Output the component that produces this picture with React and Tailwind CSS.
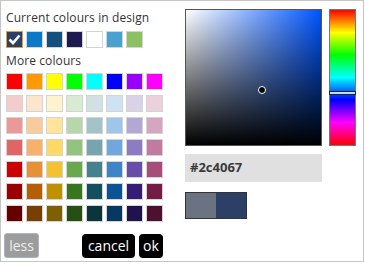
import React from 'react';

const current = ['#2c4067', '#0b79c6', '#14507b', '#1c1a4e', '#ffffff', '#48a2cd', '#8cc163'];

const palette = [
  ['#ff0000', '#ff9900', '#ffff00', '#00ff00', '#00ffff', '#0000ff', '#9900ff', '#ff00ff'],
  ['#f4cccc', '#fce5cd', '#fff2cc', '#d9ead3', '#d0e0e3', '#cfe2f3', '#d9d2e9', '#ead1dc'],
  ['#ea9999', '#f9cb9c', '#ffe599', '#b6d7a8', '#a2c4c9', '#9fc5e8', '#b4a7d6', '#d5a6bd'],
  ['#e06666', '#f6b26b', '#ffd966', '#93c47d', '#76a5af', '#6fa8dc', '#8e7cc3', '#c27ba0'],
  ['#cc0000', '#e69138', '#f1c232', '#6aa84f', '#45818e', '#3d85c6', '#674ea7', '#a64d79'],
  ['#990000', '#b45f06', '#bf9000', '#38761d', '#134f5c', '#0b5394', '#351c75', '#741b47'],
  ['#660000', '#783f04', '#7f6000', '#274e13', '#0c343d', '#073763', '#20124d', '#4c1130'],
];

function Swatch({ color, selected }) {
  return (
    <div
      className={`w-[17px] h-[17px] border flex items-center justify-center ${
        selected ? 'border-[#e0a030]' : 'border-[#d4d4d4]'
      }`}
      style={{ backgroundColor: color }}
    >
      {selected && (
        <svg width="13" height="11" viewBox="0 0 13 11">
          <path d="M1.5 5.5 L5 9 L11.5 1.5" fill="none" stroke="#fff" strokeWidth="2.6" />
        </svg>
      )}
    </div>
  );
}

export default function App() {
  return (
    <div
      className="w-[364px] h-[262px] border border-[#c6c6c6] bg-white flex text-[#333]"
      style={{ fontFamily: '"Open Sans", "Liberation Sans", sans-serif' }}
    >
      {/* Left: swatches */}
      <div className="w-[184px] pl-[5px] pt-[9px] flex flex-col">
        <div className="text-[12px] leading-[16px] tracking-[0.1px]">Current colours in design</div>
        <div className="mt-[5px] flex gap-x-[3px]">
          {current.map((c, i) => (
            <Swatch key={i} color={c} selected={i === 0} />
          ))}
        </div>
        <div className="mt-[5px] text-[12px] leading-[16px] tracking-[0.1px]">More colours</div>
        <div className="mt-[4px] grid grid-cols-[repeat(8,17px)] gap-x-[3px] gap-y-[5px]">
          {palette.flat().map((c, i) => (
            <Swatch key={i} color={c} />
          ))}
        </div>

        <div className="mt-auto mb-[3px] -ml-[2px] flex items-end">
          <button className="h-[25px] w-[35px] rounded-[3px] bg-[#9c9c9c] border border-[#aab4c6] text-[#eeeeee] text-[14px] leading-none">
            less
          </button>
          <button className="ml-[43px] h-[24px] w-[53px] rounded-[4px] bg-black text-white text-[14px] leading-none">
            cancel
          </button>
          <button className="ml-[4px] h-[24px] w-[24px] rounded-[4px] bg-black text-white text-[14px] leading-none">
            ok
          </button>
        </div>
      </div>

      {/* Right: picker */}
      <div className="pt-[8px] flex flex-col">
        <div className="flex">
          <div className="relative w-[137px] h-[137px] border border-[#555]">
            <div
              className="absolute inset-0"
              style={{
                background:
                  'linear-gradient(to bottom, rgba(0,0,0,0), #000), linear-gradient(to right, #fff, rgba(255,255,255,0)), #0055ff',
              }}
            />
            <div className="absolute left-[72px] top-[76px] w-[8px] h-[8px] rounded-full bg-black border border-white" />
          </div>
          <div className="relative ml-[7px] w-[27px] h-[137px] border border-[#777]">
            <div
              className="absolute inset-0"
              style={{
                background:
                  'linear-gradient(to bottom, #ff0000, #ffff00 16.7%, #00ff00 33.3%, #00ffff 50%, #0000ff 66.7%, #ff00ff 83.3%, #ff0000)',
              }}
            />
            <div className="absolute -left-[1px] -right-[1px] top-[81px] h-[4px] bg-[#c4dcf8] border border-[#222]" />
          </div>
        </div>

        <div className="mt-[8px] w-[137px] h-[28px] bg-[#e0e0e0] flex items-center pl-[5px] text-[13px] font-bold text-[#3a3a3a]">
          #2c4067
        </div>

        <div className="mt-[10px] flex w-[62px] h-[27px] border border-[#333]">
          <div className="flex-1 bg-[#6b7383]" />
          <div className="flex-1 bg-[#2c4067]" />
        </div>
      </div>
    </div>
  );
}
